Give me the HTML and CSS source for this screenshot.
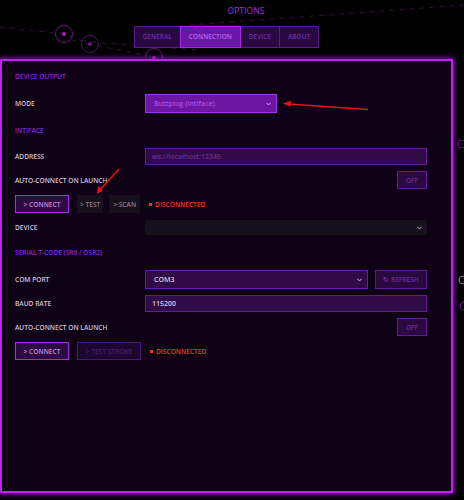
FILE: index.html
```html
<!DOCTYPE html>
<html lang="en">
<head>
    <meta charset="UTF-8">
    <meta name="viewport" content="width=device-width, initial-scale=1.0">
    <title>Options</title>
    <link rel="stylesheet" href="styles.css">
</head>
<body>
    <!-- background network decoration -->
    <svg class="backdrop" width="464" height="500" viewBox="0 0 464 500">
        <g fill="none" stroke="#3c0c4c" stroke-width="1" stroke-dasharray="4 6">
            <path d="M0 27 L64 34 L90 44 L154 57"/>
            <path d="M72 40 L140 46 L200 50"/>
            <path d="M190 25 L464 5"/>
        </g>
        <g fill="none" stroke-width="1">
            <circle cx="64" cy="34" r="8.5" stroke="#6a1a7c"/>
            <circle cx="90" cy="44" r="8.5" stroke="#4e1660"/>
            <circle cx="154" cy="57" r="8.5" stroke="#6a1a7c"/>
            <circle cx="462" cy="144" r="4" stroke="#6a1a7c"/>
            <circle cx="463" cy="280" r="4" stroke="#8a7a9a"/>
            <circle cx="464" cy="306" r="4" stroke="#6a1a7c"/>
        </g>
        <circle cx="64" cy="34" r="2" fill="#b21cb6"/>
        <circle cx="90" cy="44" r="2" fill="#6e1a80"/>
        <circle cx="154" cy="58" r="2" fill="#b21cb6"/>
    </svg>

    <div class="window">
        <div class="title">OPTIONS</div>
        <nav class="tabs">
            <span class="tab">GENERAL</span>
            <span class="tab active">CONNECTION</span>
            <span class="tab">DEVICE</span>
            <span class="tab">ABOUT</span>
        </nav>

        <div class="panel">
            <div class="heading">DEVICE OUTPUT</div>
            <div class="row">
                <label>MODE</label>
                <div class="select mode">
                    <span>Buttplug (Intiface)</span>
                    <svg class="chev" width="5" height="4" viewBox="0 0 5 4"><path d="M0.5 0.8 L2.5 3 L4.5 0.8" fill="none" stroke="#c9a6e6" stroke-width="1"/></svg>
                </div>
            </div>

            <div class="heading">INTIFACE</div>
            <div class="row">
                <label>ADDRESS</label>
                <div class="field placeholder">ws://localhost:12345</div>
            </div>
            <div class="row">
                <label>AUTO-CONNECT ON LAUNCH</label>
                <button class="toggle">OFF</button>
            </div>
            <div class="actions">
                <button class="btn primary">&gt; CONNECT</button>
                <button class="btn ghost">&gt; TEST</button>
                <button class="btn ghost">&gt; SCAN</button>
                <span class="status">DISCONNECTED</span>
            </div>
            <div class="row device-row">
                <label>DEVICE</label>
                <div class="select dark">
                    <span></span>
                    <svg class="chev" width="5" height="4" viewBox="0 0 5 4"><path d="M0.5 0.8 L2.5 3 L4.5 0.8" fill="none" stroke="#b8b0c0" stroke-width="1"/></svg>
                </div>
            </div>

            <div class="heading">SERIAL T-CODE (SR6 / OSR2)</div>
            <div class="row">
                <label>COM PORT</label>
                <div class="pair">
                    <div class="select port">
                        <span>COM3</span>
                        <svg class="chev" width="5" height="4" viewBox="0 0 5 4"><path d="M0.5 0.8 L2.5 3 L4.5 0.8" fill="none" stroke="#c9b6dc" stroke-width="1"/></svg>
                    </div>
                    <button class="btn refresh">&#x21bb; REFRESH</button>
                </div>
            </div>
            <div class="row">
                <label>BAUD RATE</label>
                <div class="field value">115200</div>
            </div>
            <div class="row">
                <label>AUTO-CONNECT ON LAUNCH</label>
                <button class="toggle">OFF</button>
            </div>
            <div class="actions">
                <button class="btn primary">&gt; CONNECT</button>
                <button class="btn disabled">&gt; TEST STROKE</button>
                <span class="status">DISCONNECTED</span>
            </div>
        </div>
    </div>

    <!-- red annotation arrows -->
    <svg class="marks" width="464" height="500" viewBox="0 0 464 500">
        <g stroke="#e8101a" stroke-width="1.5" fill="#e8101a">
            <line x1="368" y1="109.5" x2="288" y2="104"/>
            <path d="M283 103.6 L291 100.8 L290.6 106.8 Z" stroke="none"/>
            <line x1="119" y1="169" x2="100" y2="190"/>
            <path d="M97 194 L98 186 L103 190.5 Z" stroke="none"/>
        </g>
    </svg>
</body>
</html>
```

FILE: styles.css
```css
body {
    margin: 0;
    width: 464px;
    height: 500px;
    overflow: hidden;
    position: relative;
    background-color: #000;
    font-family: "Open Sans", "Liberation Sans", sans-serif;
}

.backdrop,
.marks {
    position: absolute;
    left: 0;
    top: 0;
}

.marks {
    z-index: 5;
}

.window {
    position: relative;
    width: 453px;
}

.title {
    padding: 5px 0 0 39px;
    height: 12px;
    line-height: 12px;
    text-align: center;
    font-size: 8.5px;
    color: #a12fe2;
    letter-spacing: 0.1px;
}

.tabs {
    display: flex;
    justify-content: center;
    margin-top: 9px;
}

.tab {
    height: 20px;
    line-height: 20px;
    padding: 0 8px;
    border: 1px solid #5a1a8e;
    background-color: #2a0842;
    color: #6e2ea6;
    font-size: 6.5px;
    font-weight: 600;
}

.tab + .tab {
    margin-left: -1px;
}

.tab.active {
    position: relative;
    background-color: #6a16a6;
    border-color: #aa28ee;
    color: #b468e8;
}

.panel {
    margin-top: 11px;
    height: 426px;
    border: 2px solid #c021f2;
    background-color: #0f0217;
    box-shadow: 0 0 5px 1px #9a00d6;
    padding: 4px 24px 0 13px;
    display: flex;
    flex-direction: column;
    gap: 6px;
}

.heading {
    height: 10px;
    line-height: 10px;
    margin: 7px 0 6px;
    font-size: 6.6px;
    font-weight: 600;
    color: #9323d0;
}

.row {
    display: grid;
    grid-template-columns: 130px 1fr;
    align-items: center;
}

.row label {
    font-size: 6.6px;
    font-weight: 600;
    color: #cfc3da;
}

.device-row {
    margin-top: 1px;
}

.select {
    display: flex;
    align-items: center;
    justify-content: space-between;
    box-sizing: border-box;
    padding: 0 5px 0 8px;
    font-size: 7px;
    font-weight: 600;
}

.select.mode {
    width: 132px;
    height: 19px;
    background-color: #6b17a3;
    border: 1px solid #a534e8;
    color: #a94ee8;
}

.select.dark {
    height: 15px;
    background-color: #17111d;
    border-radius: 2px;
}

.select.port {
    flex: 1;
    height: 19px;
    background-color: #300b47;
    border: 1px solid #6a1ca6;
    color: #d4c8e0;
}

.field {
    box-sizing: border-box;
    height: 17px;
    line-height: 15px;
    padding: 0 6px;
    background-color: #310b48;
    border: 1px solid #5e1c96;
    font-size: 7px;
    font-weight: 600;
}

.field.placeholder {
    color: #6a2aa2;
}

.field.value {
    color: #d4c8e0;
}

.pair {
    display: flex;
    gap: 7px;
}

button {
    font-family: inherit;
    cursor: pointer;
}

.toggle {
    justify-self: end;
    width: 30px;
    height: 18px;
    padding: 0;
    background-color: #2b0a42;
    border: 1px solid #5f1c99;
    color: #6c26a6;
    font-size: 6.6px;
    font-weight: 600;
}

.actions {
    display: flex;
    align-items: center;
    gap: 8px;
    height: 18px;
}

.btn {
    height: 18px;
    padding: 0 8px;
    font-size: 6.6px;
    font-weight: 600;
    border: 1px solid transparent;
    white-space: nowrap;
}

.btn.primary {
    width: 54px;
    padding: 0;
    background-color: #2c0a42;
    border-color: #a42ae4;
    color: #c48ae8;
}

.btn.ghost {
    padding: 0 2px;
    background-color: #17101d;
    color: #8a7e92;
}

.btn.ghost + .btn.ghost {
    margin-left: -2px;
    padding: 0 3px;
}

.btn.disabled {
    width: 64px;
    padding: 0;
    background-color: #1c0730;
    border-color: #4a1578;
    color: #4c1b78;
}

.btn.refresh {
    width: 52px;
    height: 19px;
    padding: 0;
    background-color: #2a0840;
    border-color: #5a1a90;
    color: #6a2aa2;
}

.status {
    display: flex;
    align-items: center;
    gap: 3px;
    margin-left: 1px;
    font-size: 6.6px;
    font-weight: 600;
    color: #e2401c;
}

.status::before {
    content: "";
    width: 3px;
    height: 3px;
    background-color: #e2401c;
}
```
